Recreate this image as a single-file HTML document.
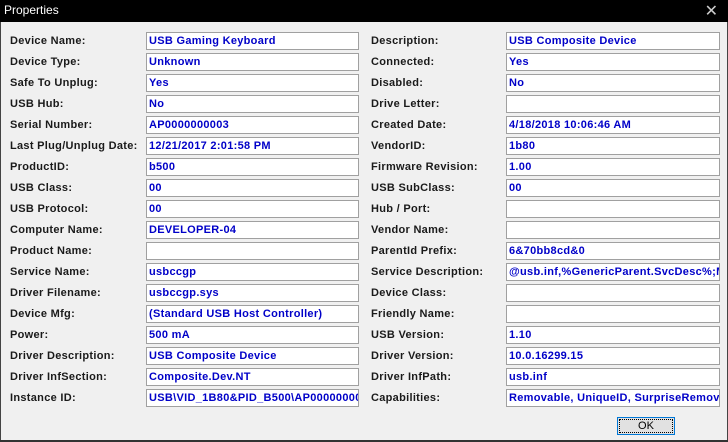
<!DOCTYPE html>
<html><head><meta charset="utf-8"><style>
*{margin:0;padding:0;box-sizing:border-box}
body{width:728px;height:442px;background:#f0f0f0;font-family:"Liberation Sans",sans-serif;font-weight:bold;font-size:11px;letter-spacing:0.3px;position:relative;overflow:hidden}
.title{position:absolute;left:0;top:0;width:728px;height:22px;background:#000;color:#fff;font-weight:normal;font-size:12px;letter-spacing:0;padding:3px 0 0 4px}
.x{position:absolute;right:10px;top:1px;color:#ccc;font-size:16px;font-weight:normal}
.bl{position:absolute;left:0;top:22px;width:1px;height:420px;background:#444}
.br{position:absolute;right:0;top:22px;width:1px;height:420px;background:#444}
.bb{position:absolute;left:0;bottom:0;width:728px;height:2px;background:#333}
.l{position:absolute;color:#1a1a1a;height:18px;line-height:18px;white-space:nowrap}
.f{position:absolute;height:18px;background:#fff;border:1px solid #a0a0a0;color:#0000c8;line-height:16px;padding-left:2px;white-space:nowrap;overflow:hidden}
.ok{position:absolute;left:617px;top:417px;width:58px;height:18px;border:1px solid #0078d7;background:#e1e1e1;outline:1px dotted #000;outline-offset:-3px;text-align:center;line-height:16px;font-weight:normal;color:#000;letter-spacing:0}
</style></head><body>
<div class="title">Properties<span class="x">✕</span></div>
<div class="bl"></div><div class="br"></div><div class="bb"></div>
<div id="c"></div>
<div class="ok">OK</div>
<script>
var L=[["Device Name:","USB Gaming Keyboard"],["Device Type:","Unknown"],["Safe To Unplug:","Yes"],["USB Hub:","No"],["Serial Number:","AP0000000003"],["Last Plug/Unplug Date:","12/21/2017 2:01:58 PM"],["ProductID:","b500"],["USB Class:","00"],["USB Protocol:","00"],["Computer Name:","DEVELOPER-04"],["Product Name:",""],["Service Name:","usbccgp"],["Driver Filename:","usbccgp.sys"],["Device Mfg:","(Standard USB Host Controller)"],["Power:","500 mA"],["Driver Description:","USB Composite Device"],["Driver InfSection:","Composite.Dev.NT"],["Instance ID:","USB\\VID_1B80&PID_B500\\AP0000000003"]];
var R=[["Description:","USB Composite Device"],["Connected:","Yes"],["Disabled:","No"],["Drive Letter:",""],["Created Date:","4/18/2018 10:06:46 AM"],["VendorID:","1b80"],["Firmware Revision:","1.00"],["USB SubClass:","00"],["Hub / Port:",""],["Vendor Name:",""],["ParentId Prefix:","6&70bb8cd&0"],["Service Description:","@usb.inf,%GenericParent.SvcDesc%;Microsoft"],["Device Class:",""],["Friendly Name:",""],["USB Version:","1.10"],["Driver Version:","10.0.16299.15"],["Driver InfPath:","usb.inf"],["Capabilities:","Removable, UniqueID, SurpriseRemovalOK"]];
var h="";
function e(s){return s.replace(/&/g,"&amp;")}
for(var i=0;i<18;i++){var y=32+21*i;
h+='<div class="l" style="left:10px;top:'+y+'px">'+L[i][0]+'</div><div class="f" style="left:146px;top:'+y+'px;width:213px">'+e(L[i][1])+'</div>';
h+='<div class="l" style="left:371px;top:'+y+'px">'+R[i][0]+'</div><div class="f" style="left:506px;top:'+y+'px;width:214px">'+e(R[i][1])+'</div>';}
document.getElementById("c").innerHTML=h;
</script>
</body></html>
